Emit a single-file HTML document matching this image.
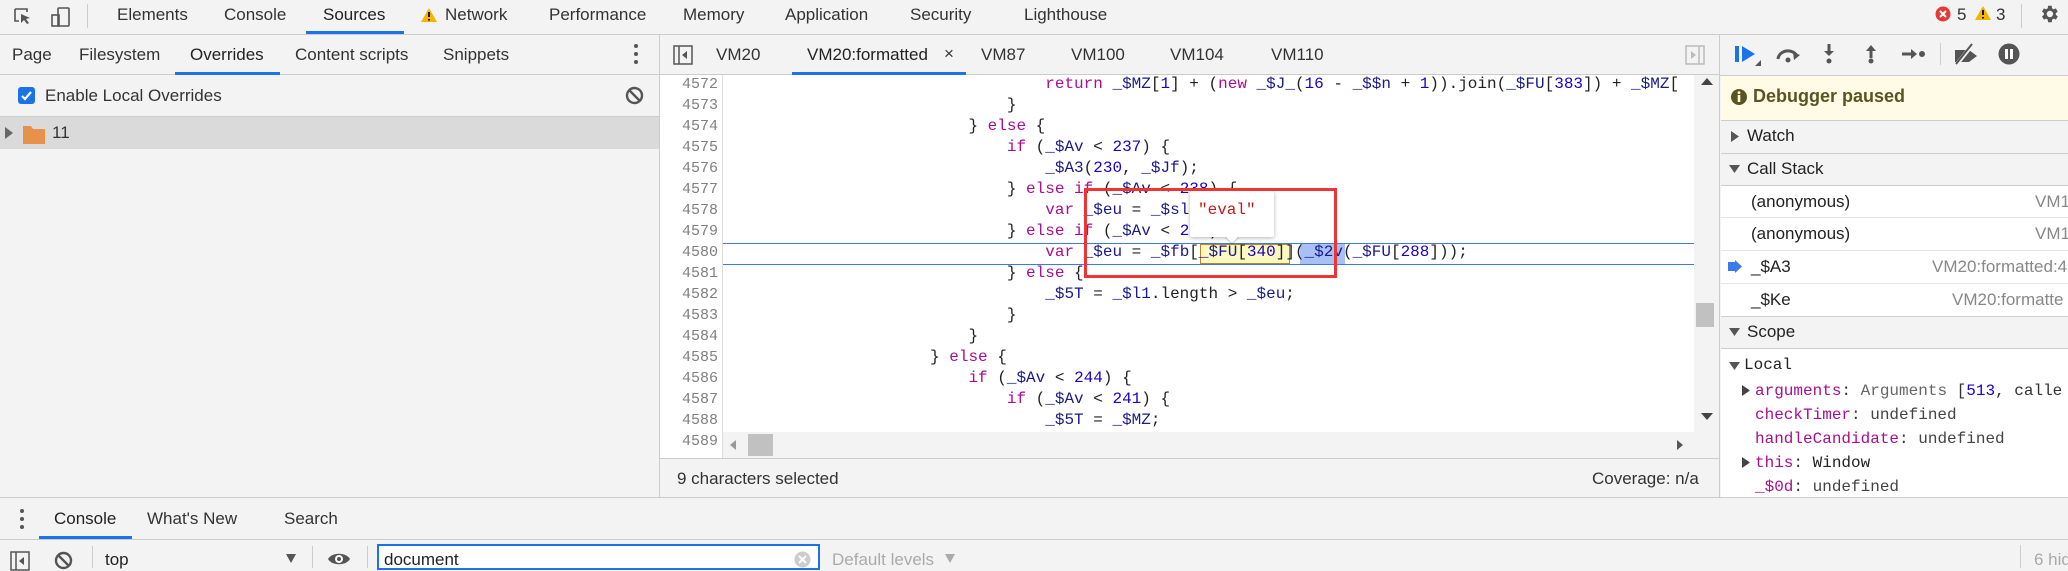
<!DOCTYPE html>
<html><head><meta charset="utf-8"><style>
*{margin:0;padding:0;box-sizing:border-box}
body{width:2068px;height:568px;overflow:hidden;background:#f3f3f3;font-family:"Liberation Sans",sans-serif;font-size:17px;color:#333;position:relative}
.a{position:absolute;white-space:pre}
.hl{position:absolute;background:#ccc}
.mono{font-family:"Liberation Mono",monospace;font-size:16px}
.k{color:#aa0d91}.n{color:#1c00cf}.v{color:#1a1a8a}.s{color:#c41a16}
.ln{position:absolute;left:660px;width:58px;text-align:right;color:#808080;font-family:"Liberation Mono",monospace;font-size:15px}
.cl{position:absolute;left:738px;font-family:"Liberation Mono",monospace;font-size:16px;white-space:pre;color:#222}
</style></head><body>
<!-- top toolbar -->
<div class="hl" style="left:0;top:34px;width:2068px;height:1px"></div>
<svg class="a" style="left:13px;top:7px" width="20" height="20" viewBox="0 0 20 20"><path d="M2 2h12v3M2 2v12h4" fill="none" stroke="#555" stroke-width="1.6"/><path d="M8 7l9 4-4 1 3 4-2 1-3-4-3 3z" fill="#555"/></svg>
<svg class="a" style="left:50px;top:6px" width="22" height="22" viewBox="0 0 22 22"><rect x="8" y="2" width="11" height="18" rx="1" fill="none" stroke="#555" stroke-width="1.6"/><rect x="2" y="9" width="7" height="11" fill="none" stroke="#555" stroke-width="1.6"/></svg>
<div class="hl" style="left:87px;top:4px;width:1px;height:24px"></div>
<div class="a" style="left:117px;top:5px">Elements</div>
<div class="a" style="left:224px;top:5px">Console</div>
<div class="a" style="left:323px;top:5px;color:#222">Sources</div>
<div class="a" style="left:306px;top:31px;width:98px;height:3px;background:#1a73e8"></div>
<svg class="a" style="left:420px;top:7px" width="18" height="16"><path d="M9 1L17 15H1z" fill="#f4b400"/><path d="M9 5v5M9 12v1.5" stroke="#000" stroke-width="1.8"/></svg>
<div class="a" style="left:445px;top:5px">Network</div>
<div class="a" style="left:549px;top:5px">Performance</div>
<div class="a" style="left:683px;top:5px">Memory</div>
<div class="a" style="left:785px;top:5px">Application</div>
<div class="a" style="left:910px;top:5px">Security</div>
<div class="a" style="left:1024px;top:5px">Lighthouse</div>
<svg class="a" style="left:1935px;top:6px" width="16" height="16"><circle cx="8" cy="8" r="7.5" fill="#e53935"/><path d="M5 5l6 6M11 5l-6 6" stroke="#fff" stroke-width="2"/></svg>
<div class="a" style="left:1957px;top:5px">5</div>
<svg class="a" style="left:1974px;top:5px" width="18" height="16"><path d="M9 1L17 15H1z" fill="#f4b400"/><path d="M9 5v5M9 12v1.5" stroke="#000" stroke-width="1.8"/></svg>
<div class="a" style="left:1996px;top:5px">3</div>
<div class="hl" style="left:2021px;top:4px;width:1px;height:24px"></div>
<svg class="a" style="left:2038px;top:3px" width="22" height="22" viewBox="0 0 24 24"><path fill="#555" d="M19.4 13a7.5 7.5 0 000-2l2.1-1.6-2-3.5-2.5 1a7 7 0 00-1.7-1L15 3h-4l-.4 2.9a7 7 0 00-1.7 1l-2.5-1-2 3.5L6.5 11a7.5 7.5 0 000 2l-2.100 1.6 2 3.5 2.5-1a7 7 0 001.7 1L11 21h4l.4-2.9a7 7 0 001.7-1l2.5 1 2-3.5zM13 15.5a3.5 3.5 0 110-7 3.5 3.5 0 010 7z"/></svg>

<!-- left sidebar -->
<div class="hl" style="left:0;top:74px;width:659px;height:1px"></div>
<div class="a" style="left:12px;top:45px">Page</div>
<div class="a" style="left:79px;top:45px">Filesystem</div>
<div class="a" style="left:190px;top:45px;color:#222">Overrides</div>
<div class="a" style="left:175px;top:72px;width:105px;height:3px;background:#1a73e8"></div>
<div class="a" style="left:295px;top:45px">Content scripts</div>
<div class="a" style="left:443px;top:45px">Snippets</div>
<div class="a" style="left:634px;top:44px;width:4px;height:4px;border-radius:2px;background:#555;box-shadow:0 8px 0 #555,0 16px 0 #555"></div>
<div class="a" style="left:18px;top:87px;width:17px;height:17px;border-radius:3px;background:#1a73e8"></div>
<svg class="a" style="left:18px;top:87px" width="17" height="17"><path d="M4 9l3 3 6-7" fill="none" stroke="#fff" stroke-width="2.2"/></svg>
<div class="a" style="left:45px;top:86px">Enable Local Overrides</div>
<svg class="a" style="left:625px;top:86px" width="19" height="19"><circle cx="9.5" cy="9.5" r="7.5" fill="none" stroke="#555" stroke-width="2.4"/><path d="M4.5 4.5l10 10" stroke="#555" stroke-width="2.4"/></svg>
<div class="hl" style="left:0;top:116px;width:659px;height:1px"></div>
<div class="a" style="left:0;top:117px;width:659px;height:32px;background:#dadada"></div>
<svg class="a" style="left:5px;top:127px" width="8" height="12"><path d="M0 0l8 6-8 6z" fill="#666"/></svg>
<svg class="a" style="left:23px;top:124px" width="22" height="20"><path d="M0 2h8l2 3h12v15H0z" fill="#e8914a"/></svg>
<div class="a" style="left:52px;top:123px">11</div>
<div class="hl" style="left:659px;top:34px;width:1px;height:464px"></div>

<!-- editor tabs -->
<div class="hl" style="left:660px;top:74px;width:1060px;height:1px"></div>
<svg class="a" style="left:673px;top:45px" width="20" height="20"><rect x="1" y="1" width="18" height="18" fill="none" stroke="#555" stroke-width="1.5"/><path d="M6 1v18" stroke="#555" stroke-width="1.5"/><path d="M14 6l-5 4 5 4z" fill="#555"/></svg>
<div class="a" style="left:716px;top:45px">VM20</div>
<div class="a" style="left:807px;top:45px;color:#222">VM20:formatted</div>
<div class="a" style="left:944px;top:44px">×</div>
<div class="a" style="left:792px;top:72px;width:174px;height:3px;background:#1a73e8"></div>
<div class="a" style="left:981px;top:45px">VM87</div>
<div class="a" style="left:1071px;top:45px">VM100</div>
<div class="a" style="left:1170px;top:45px">VM104</div>
<div class="a" style="left:1271px;top:45px">VM110</div>
<svg class="a" style="left:1685px;top:45px" width="20" height="20"><rect x="1" y="1" width="18" height="18" fill="none" stroke="#bbb" stroke-width="1.5"/><path d="M14 1v18" stroke="#bbb" stroke-width="1.5"/><path d="M6 6l5 4-5 4z" fill="#bbb"/></svg>

<!-- code area -->
<div class="a" style="left:660px;top:75px;width:1034px;height:357px;background:#fff"></div>
<div class="a" style="left:660px;top:75px;width:63px;height:383px;background:#fff;border-right:1px solid #ddd"></div>
<div class="a" style="left:723px;top:243px;width:971px;height:1px;background:#3b7ae8"></div>
<div class="a" style="left:723px;top:264px;width:971px;height:1px;background:#3b7ae8"></div>
<div class="a" style="left:1200px;top:244px;width:90px;height:20px;background:#fbf8c0;border:1px solid #b7862a"></div>
<div class="a" style="left:1300px;top:244px;width:45px;height:20px;background:#a8c0f5"></div>

<div class="ln" style="top:76px">4572</div><div class="cl" style="top:75px">                                <span class="k">return</span> <span class="v">_$MZ</span>[<span class="n">1</span>] + (<span class="k">new</span> <span class="v">_$J_</span>(<span class="n">16</span> - <span class="v">_$$n</span> + <span class="n">1</span>)).join(<span class="v">_$FU</span>[<span class="n">383</span>]) + <span class="v">_$MZ</span>[</div>
<div class="ln" style="top:97px">4573</div><div class="cl" style="top:96px">                            }</div>
<div class="ln" style="top:118px">4574</div><div class="cl" style="top:117px">                        } <span class="k">else</span> {</div>
<div class="ln" style="top:139px">4575</div><div class="cl" style="top:138px">                            <span class="k">if</span> (<span class="v">_$Av</span> &lt; <span class="n">237</span>) {</div>
<div class="ln" style="top:160px">4576</div><div class="cl" style="top:159px">                                <span class="v">_$A3</span>(<span class="n">230</span>, <span class="v">_$Jf</span>);</div>
<div class="ln" style="top:181px">4577</div><div class="cl" style="top:180px">                            } <span class="k">else if</span> (<span class="v">_$Av</span> &lt; <span class="n">238</span>) {</div>
<div class="ln" style="top:202px">4578</div><div class="cl" style="top:201px">                                <span class="k">var</span> <span class="v">_$eu</span> = <span class="v">_$sl</span></div>
<div class="ln" style="top:223px">4579</div><div class="cl" style="top:222px">                            } <span class="k">else if</span> (<span class="v">_$Av</span> &lt; <span class="n">239</span>) {</div>
<div class="ln" style="top:244px">4580</div><div class="cl" style="top:243px">                                <span class="k">var</span> <span class="v">_$eu</span> = <span class="v">_$fb</span>[<span class="v">_$FU</span>[<span class="n">340</span>]](<span class="v">_$2v</span>(<span class="v">_$FU</span>[<span class="n">288</span>]));</div>
<div class="ln" style="top:265px">4581</div><div class="cl" style="top:264px">                            } <span class="k">else</span> {</div>
<div class="ln" style="top:286px">4582</div><div class="cl" style="top:285px">                                <span class="v">_$5T</span> = <span class="v">_$l1</span>.length &gt; <span class="v">_$eu</span>;</div>
<div class="ln" style="top:307px">4583</div><div class="cl" style="top:306px">                            }</div>
<div class="ln" style="top:328px">4584</div><div class="cl" style="top:327px">                        }</div>
<div class="ln" style="top:349px">4585</div><div class="cl" style="top:348px">                    } <span class="k">else</span> {</div>
<div class="ln" style="top:370px">4586</div><div class="cl" style="top:369px">                        <span class="k">if</span> (<span class="v">_$Av</span> &lt; <span class="n">244</span>) {</div>
<div class="ln" style="top:391px">4587</div><div class="cl" style="top:390px">                            <span class="k">if</span> (<span class="v">_$Av</span> &lt; <span class="n">241</span>) {</div>
<div class="ln" style="top:412px">4588</div><div class="cl" style="top:411px">                                <span class="v">_$5T</span> = <span class="v">_$MZ</span>;</div>
<div class="ln" style="top:433px">4589</div>
<div class="a" style="left:724px;top:432px;width:970px;height:26px;background:#f3f3f3"></div>
<svg class="a" style="left:730px;top:440px" width="6" height="10"><path d="M6 0L0 5l6 5z" fill="#999"/></svg>
<div class="a" style="left:748px;top:434px;width:25px;height:22px;background:#c1c1c1"></div>
<svg class="a" style="left:1677px;top:440px" width="6" height="10"><path d="M0 0l6 5-6 5z" fill="#555"/></svg>
<div class="a" style="left:1694px;top:75px;width:26px;height:383px;background:#f3f3f3"></div>
<svg class="a" style="left:1701px;top:77px" width="12" height="8"><path d="M0 8l6-7 6 7z" fill="#444"/></svg>
<div class="a" style="left:1696px;top:303px;width:18px;height:24px;background:#c1c1c1"></div>
<svg class="a" style="left:1701px;top:413px" width="12" height="8"><path d="M0 0l6 7 6-7z" fill="#444"/></svg>

<!-- tooltip and red box -->
<div class="a" style="left:1190px;top:191px;width:84px;height:46px;background:#fff;box-shadow:0 1px 4px rgba(0,0,0,.3);border-radius:2px"></div>
<div class="a" style="left:1227px;top:231px;width:10px;height:10px;background:#fff;transform:rotate(45deg);box-shadow:1px 1px 1px rgba(0,0,0,.2)"></div>
<div class="a mono s" style="left:1198px;top:201px">"eval"</div>
<div class="a" style="left:1084px;top:188px;width:253px;height:90px;border:3px solid #f03434"></div>

<!-- editor status bar -->
<div class="hl" style="left:660px;top:458px;width:1060px;height:1px"></div>
<div class="a" style="left:677px;top:469px">9 characters selected</div>
<div class="a" style="left:1592px;top:469px">Coverage: n/a</div>
<div class="hl" style="left:1719px;top:34px;width:1px;height:464px"></div>

<!-- right panel -->
<div class="hl" style="left:1720px;top:75px;width:348px;height:1px"></div>
<svg class="a" style="left:1735px;top:44px" width="28" height="24"><rect x="0" y="2" width="4" height="16" fill="#1a73e8"/><path d="M7 2l13 8-13 8z" fill="#1a73e8"/><path d="M26 16v6h-6z" fill="#555"/></svg>
<svg class="a" style="left:1775px;top:45px" width="28" height="20"><path d="M3 14a10 9 0 0119-3" fill="none" stroke="#555" stroke-width="3"/><path d="M18 7l7 3-6 5z" fill="#555"/><circle cx="13" cy="15" r="2.5" fill="#555"/></svg>
<svg class="a" style="left:1822px;top:43px" width="14" height="22"><path d="M7 1v9" stroke="#555" stroke-width="3"/><path d="M2 8h10l-5 5z" fill="#555"/><circle cx="7" cy="18" r="2.5" fill="#555"/></svg>
<svg class="a" style="left:1864px;top:43px" width="14" height="22"><path d="M7 6v9" stroke="#555" stroke-width="3"/><path d="M2 8h10L7 2z" fill="#555"/><circle cx="7" cy="18" r="2.5" fill="#555"/></svg>
<svg class="a" style="left:1902px;top:47px" width="24" height="14"><path d="M0 7h10" stroke="#555" stroke-width="3"/><path d="M9 2l6 5-6 5z" fill="#555"/><circle cx="20" cy="7" r="3" fill="#555"/></svg>
<div class="hl" style="left:1940px;top:43px;width:1px;height:22px"></div>
<svg class="a" style="left:1953px;top:42px" width="28" height="24"><path d="M2 8h14l8 6-8 6H2z" fill="#555"/><path d="M4 22L20 2" stroke="#f3f3f3" stroke-width="4"/><path d="M3 22L19 2" stroke="#555" stroke-width="2"/></svg>
<svg class="a" style="left:1998px;top:43px" width="22" height="22"><circle cx="11" cy="11" r="10.5" fill="#555"/><rect x="7" y="6" width="3" height="10" fill="#fff"/><rect x="12" y="6" width="3" height="10" fill="#fff"/></svg>

<div class="a" style="left:1721px;top:76px;width:347px;height:44px;background:#fffbe6"></div>
<svg class="a" style="left:1730px;top:88px" width="18" height="18"><circle cx="9" cy="9" r="8" fill="#5a5520"/><rect x="7.7" y="7" width="2.6" height="7" fill="#fffbe6"/><circle cx="9" cy="4.6" r="1.4" fill="#fffbe6"/></svg>
<div class="a" style="left:1753px;top:86px;font-weight:bold;font-size:18px;color:#5a5520">Debugger paused</div>
<div class="hl" style="left:1721px;top:120px;width:347px;height:1px"></div>
<svg class="a" style="left:1731px;top:131px" width="8" height="11"><path d="M0 0l8 5.5-8 5.5z" fill="#555"/></svg>
<div class="a" style="left:1747px;top:126px;color:#222">Watch</div>
<div class="hl" style="left:1721px;top:153px;width:347px;height:1px"></div>
<svg class="a" style="left:1729px;top:165px" width="11" height="8"><path d="M0 0h11l-5.5 8z" fill="#555"/></svg>
<div class="a" style="left:1747px;top:159px;color:#222">Call Stack</div>
<div class="hl" style="left:1721px;top:185px;width:347px;height:1px"></div>
<div class="a" style="left:1721px;top:186px;width:347px;height:130px;background:#fff"></div>
<div class="a" style="left:1751px;top:192px;color:#222">(anonymous)</div><div class="a" style="left:2035px;top:192px;color:#888">VM1</div>
<div class="hl" style="left:1721px;top:217px;width:347px;height:1px;background:#e6e6e6"></div>
<div class="a" style="left:1751px;top:224px;color:#222">(anonymous)</div><div class="a" style="left:2035px;top:224px;color:#888">VM1</div>
<div class="hl" style="left:1721px;top:250px;width:347px;height:1px;background:#e6e6e6"></div>
<svg class="a" style="left:1728px;top:260px" width="14" height="13"><path d="M0 2h7V0l7 6.5-7 6.5v-2H0z" fill="#3b7ae8"/></svg>
<div class="a" style="left:1751px;top:257px;color:#222">_$A3</div><div class="a" style="left:1932px;top:257px;color:#888">VM20:formatted:4</div>
<div class="hl" style="left:1721px;top:283px;width:347px;height:1px;background:#e6e6e6"></div>
<div class="a" style="left:1751px;top:290px;color:#222">_$Ke</div><div class="a" style="left:1952px;top:290px;color:#888">VM20:formatte</div>
<div class="hl" style="left:1721px;top:316px;width:347px;height:1px"></div>
<svg class="a" style="left:1729px;top:328px" width="11" height="8"><path d="M0 0h11l-5.5 8z" fill="#555"/></svg>
<div class="a" style="left:1747px;top:322px;color:#222">Scope</div>
<div class="hl" style="left:1721px;top:348px;width:347px;height:1px"></div>
<div class="a" style="left:1721px;top:349px;width:347px;height:149px;background:#fff"></div>
<svg class="a" style="left:1729px;top:362px" width="11" height="8"><path d="M0 0h11l-5.5 8z" fill="#555"/></svg>
<div class="a mono" style="left:1744px;top:356px;color:#222">Local</div>
<svg class="a" style="left:1742px;top:385px" width="8" height="11"><path d="M0 0l8 5.5-8 5.5z" fill="#444"/></svg>
<div class="a mono" style="left:1755px;top:382px"><span class="k">arguments</span>: <span style="color:#666">Arguments</span> [<span class="n">513</span>, calle</div>
<div class="a mono" style="left:1755px;top:406px"><span class="k">checkTimer</span>: <span style="color:#444">undefined</span></div>
<div class="a mono" style="left:1755px;top:430px"><span class="k">handleCandidate</span>: <span style="color:#444">undefined</span></div>
<svg class="a" style="left:1742px;top:457px" width="8" height="11"><path d="M0 0l8 5.5-8 5.5z" fill="#444"/></svg>
<div class="a mono" style="left:1755px;top:454px"><span class="k">this</span>: <span style="color:#222">Window</span></div>
<div class="a mono" style="left:1755px;top:478px"><span class="k">_$0d</span>: <span style="color:#444">undefined</span></div>

<!-- drawer -->
<div class="hl" style="left:0;top:497px;width:2068px;height:1px"></div>
<div class="a" style="left:20px;top:509px;width:4px;height:4px;border-radius:2px;background:#555;box-shadow:0 8px 0 #555,0 16px 0 #555"></div>
<div class="a" style="left:54px;top:509px;color:#222">Console</div>
<div class="a" style="left:39px;top:536px;width:93px;height:3px;background:#1a73e8"></div>
<div class="a" style="left:147px;top:509px">What's New</div>
<div class="a" style="left:284px;top:509px">Search</div>
<div class="hl" style="left:0;top:539px;width:2068px;height:1px"></div>
<svg class="a" style="left:10px;top:551px" width="20" height="20"><rect x="1" y="1" width="18" height="18" fill="none" stroke="#555" stroke-width="1.5"/><path d="M6 1v18" stroke="#555" stroke-width="1.5"/><path d="M14 6l-5 4 5 4z" fill="#555"/></svg>
<svg class="a" style="left:54px;top:551px" width="19" height="19"><circle cx="9.5" cy="9.5" r="7.5" fill="none" stroke="#555" stroke-width="2.4"/><path d="M4.5 4.5l10 10" stroke="#555" stroke-width="2.4"/></svg>
<div class="hl" style="left:92px;top:546px;width:1px;height:22px"></div>
<div class="a" style="left:105px;top:550px;color:#222">top</div>
<svg class="a" style="left:286px;top:554px" width="10" height="9"><path d="M0 0h10l-5 9z" fill="#555"/></svg>
<div class="hl" style="left:312px;top:546px;width:1px;height:22px"></div>
<svg class="a" style="left:327px;top:550px" width="24" height="18"><path d="M1 9C5 2 19 2 23 9 19 16 5 16 1 9z" fill="#555"/><circle cx="12" cy="9" r="4" fill="#fff"/><circle cx="12" cy="9" r="2" fill="#555"/></svg>
<div class="hl" style="left:367px;top:546px;width:1px;height:22px"></div>
<div class="a" style="left:377px;top:544px;width:443px;height:26px;background:#fff;border:2px solid #1a73e8"></div>
<div class="a" style="left:384px;top:550px;color:#222">document</div>
<svg class="a" style="left:794px;top:551px" width="17" height="17"><circle cx="8.5" cy="8.5" r="8" fill="#ccc"/><path d="M5 5l7 7M12 5l-7 7" stroke="#fff" stroke-width="2"/></svg>
<div class="a" style="left:832px;top:550px;color:#aaa">Default levels</div>
<svg class="a" style="left:945px;top:554px" width="10" height="9"><path d="M0 0h10l-5 9z" fill="#aaa"/></svg>
<div class="hl" style="left:2020px;top:545px;width:1px;height:23px"></div>
<div class="a" style="left:2034px;top:550px;color:#aaa">6 hid</div>
</body></html>
